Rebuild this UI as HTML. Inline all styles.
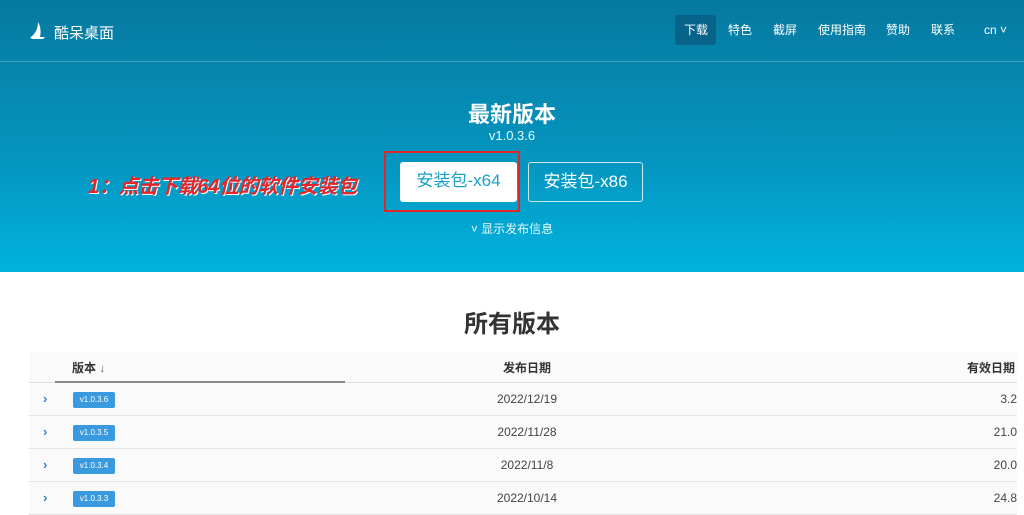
<!DOCTYPE html>
<html><head><meta charset="utf-8"><style>
*{margin:0;padding:0;box-sizing:border-box}
body{width:1024px;height:513px;overflow:hidden;background:#fff;font-family:"Liberation Sans","Noto Sans CJK SC",sans-serif;position:relative}
.hero{position:absolute;left:0;top:0;width:1024px;height:272px;background:linear-gradient(#0679a0,#0596c0 60%,#00b3dd)}
.line{position:absolute;top:61px;left:0;width:1024px;height:1px;background:rgba(255,255,255,.22)}
.logo{position:absolute;left:54px;top:22px;color:#fff;font-size:15px}
.nav{position:absolute;top:15px;height:30px;line-height:30px;color:#fff;font-size:12px}
.nav span{position:absolute;white-space:nowrap;text-align:center}
.t{position:absolute;color:#fff;text-align:center;width:1024px}
.btn{position:absolute;height:40px;line-height:38px;font-size:17px;text-align:center;border-radius:3px}
.tbl{position:absolute;left:29px;top:352px;width:988px;background:#fafafa}
.row{position:relative;height:33px;border-bottom:1px solid #e4e4e4;font-size:12px;color:#444}
.tag{position:absolute;left:44px;top:9px;width:42px;height:16px;background:#3a9ae0;color:#fff;font-size:8px;line-height:16px;text-align:center;border-radius:2px}
.chev{position:absolute;left:14px;top:8px;color:#2f7fd8;font-size:13px;font-weight:bold}
.d{position:absolute;left:4px;width:988px;text-align:center;top:9px}
.v{position:absolute;right:0;top:9px}
</style></head><body>
<div class="hero"></div>
<div class="line"></div>
<svg style="position:absolute;left:29px;top:21px" width="18" height="18" viewBox="0 0 18 18"><path d="M9 1 C12 6 12 12 11 16 L2 16 C6 13 9 8 9 1Z" fill="#fff"/><path d="M1 16 L16 16 L14 18 L3 18Z" fill="#fff"/></svg>
<div class="logo">酷呆桌面</div>
<div style="position:absolute;left:675px;top:15px;width:41px;height:30px;background:#07638a;border-radius:3px"></div>
<div class="nav"><span style="left:684px">下载</span><span style="left:728px">特色</span><span style="left:773px">截屏</span><span style="left:818px">使用指南</span><span style="left:886px">赞助</span><span style="left:931px">联系</span><span style="left:984px">cn ˅</span></div>
<div class="t" style="top:97px;font-size:22px;font-weight:bold">最新版本</div>
<div class="t" style="top:128px;font-size:13px;color:#dff">v1.0.3.6</div>
<div style="position:absolute;left:88px;top:170px;color:#e5252a;font-size:20px;font-weight:bold;font-style:italic;letter-spacing:-0.3px;text-shadow:1px 1px 0 #fff">1：点击下载64位的软件安装包</div>
<div style="position:absolute;left:384px;top:151px;width:136px;height:61px;border:2px solid #e0262c"></div>
<div class="btn" style="left:400px;top:162px;width:117px;background:#fff;color:#1ba0c8">安装包-x64</div>
<div class="btn" style="left:528px;top:162px;width:115px;border:1px solid rgba(255,255,255,.8);color:#fff">安装包-x86</div>
<div class="t" style="top:220px;font-size:12px;color:#eaf8ff">˅ 显示发布信息</div>
<div class="t" style="top:304px;font-size:24px;font-weight:bold;color:#333">所有版本</div>
<div class="tbl">
<div class="row" style="height:31px;border-bottom:1px solid #ddd;font-weight:bold;color:#333">
<span style="position:absolute;left:43px;top:7px">版本 <span style="font-weight:normal;color:#666">↓</span></span>
<div class="d" style="top:7px">发布日期</div><span class="v" style="top:7px;right:2px">有效日期</span>
<div style="position:absolute;left:26px;bottom:-1px;width:290px;height:2px;background:#888"></div></div>
<div class="row"><span class="chev">›</span><span class="tag">v1.0.3.6</span><div class="d">2022/12/19</div><span class="v">3.2</span></div>
<div class="row"><span class="chev">›</span><span class="tag">v1.0.3.5</span><div class="d">2022/11/28</div><span class="v">21.0</span></div>
<div class="row"><span class="chev">›</span><span class="tag">v1.0.3.4</span><div class="d">2022/11/8</div><span class="v">20.0</span></div>
<div class="row"><span class="chev">›</span><span class="tag">v1.0.3.3</span><div class="d">2022/10/14</div><span class="v">24.8</span></div>
</div>
</body></html>
